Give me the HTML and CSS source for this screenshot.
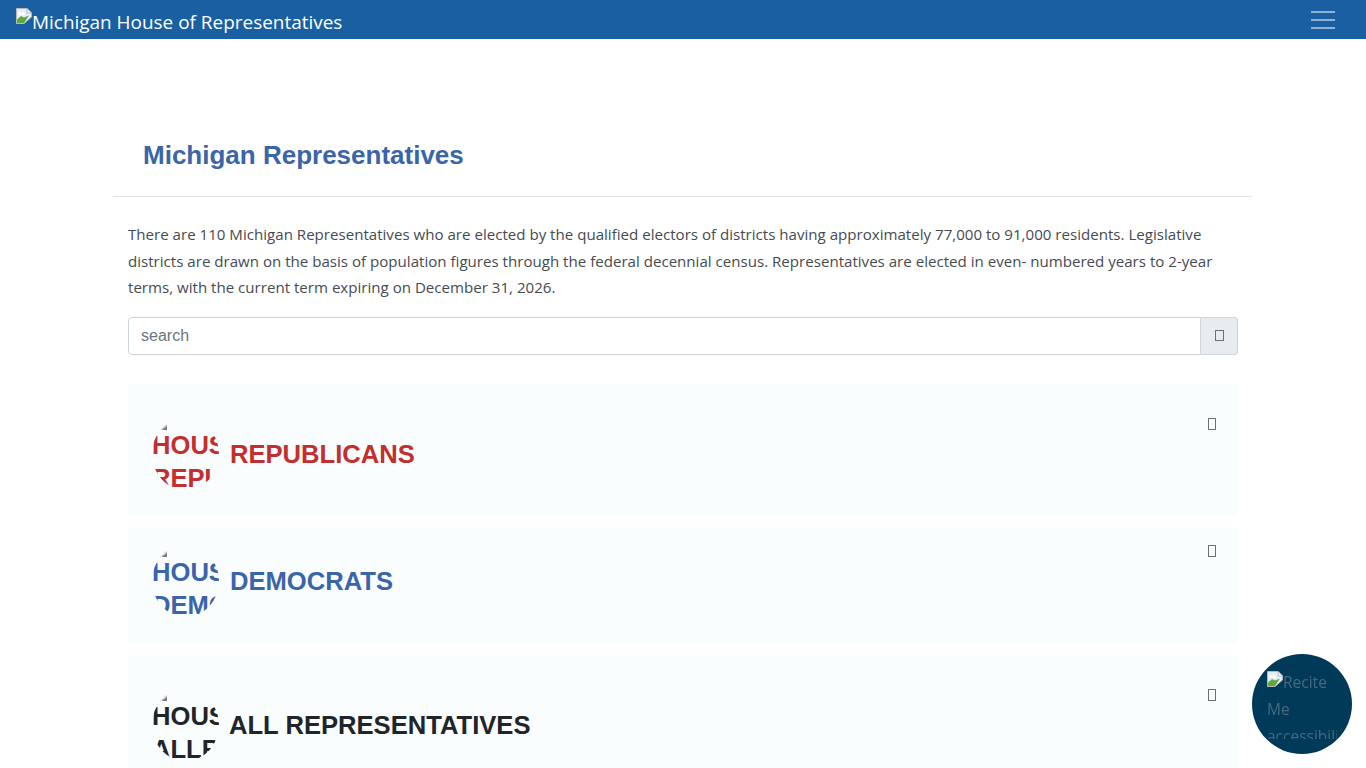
FILE: index.html
```html
<!DOCTYPE html>
<html lang="en">

<head>
    <meta charset="UTF-8">
    <title>Michigan Representatives</title>
    <link rel="stylesheet" href="styles.css">
</head>

<body>

    <div class="navbar">
        <a class="brand">
            <svg class="broken-img" width="16" height="16" viewBox="0 0 16 16">
                <path d="M0.5 0.5H11L15.5 5V9L8 15.5H0.5Z" fill="#e6edf8" stroke="#b9b9b9" />
                <path d="M1 15V11.5L5 8L8 9.5L13 7.5L8 15Z" fill="#5da93c" />
                <path d="M2 4H9V7H2Z" fill="#f8fafd" />
                <path d="M11 0.5V5H15.5Z" fill="#fff" stroke="#b9b9b9" />
            </svg>Michigan House of Representatives
        </a>
        <div class="toggler">
            <span></span>
            <span></span>
            <span></span>
        </div>
    </div>

    <div class="wrapper">
        <div class="title-row">
            <h1>Michigan Representatives</h1>
        </div>

        <div class="content">
            <p class="intro">There are 110 Michigan Representatives who are elected by the qualified electors of districts having approximately 77,000 to 91,000 residents. Legislative districts are drawn on the basis of population figures through the federal decennial census. Representatives are elected in even- numbered years to 2-year terms, with the current term expiring on December 31, 2026.</p>

            <div class="search">
                <input class="search-input" type="text" placeholder="search">
                <div class="search-btn"><span class="tofu"></span></div>
            </div>

            <div class="card card-rep">
                <div class="logo">
                    <svg class="broken-small" width="16" height="16" viewBox="0 0 16 16">
                        <path d="M8 12L15 3V12Z" fill="#c9c9c9" />
                        <path d="M10 12L15 8V12Z" fill="#777" />
                    </svg>
                    <div class="alt">HOUSE REPUBLICANS</div>
                </div>
                <h2>REPUBLICANS</h2>
                <span class="tofu card-tofu"></span>
            </div>

            <div class="card card-dem">
                <div class="logo">
                    <svg class="broken-small" width="16" height="16" viewBox="0 0 16 16">
                        <path d="M8 12L15 3V12Z" fill="#c9c9c9" />
                        <path d="M10 12L15 8V12Z" fill="#777" />
                    </svg>
                    <div class="alt">HOUSE DEMOCRATS</div>
                </div>
                <h2>DEMOCRATS</h2>
                <span class="tofu card-tofu"></span>
            </div>

            <div class="card card-all">
                <div class="logo">
                    <svg class="broken-small" width="16" height="16" viewBox="0 0 16 16">
                        <path d="M8 12L15 3V12Z" fill="#c9c9c9" />
                        <path d="M10 12L15 8V12Z" fill="#777" />
                    </svg>
                    <div class="alt">HOUSE ALLREPS</div>
                </div>
                <h2>ALL REPRESENTATIVES</h2>
                <span class="tofu card-tofu"></span>
            </div>
        </div>
    </div>

    <div class="recite">
        <div class="recite-alt">
            <svg class="broken-img recite-img" width="16" height="16" viewBox="0 0 16 16">
                <path d="M0.5 0.5H11L15.5 5V9L8 15.5H0.5Z" fill="#e6edf8" stroke="#b9b9b9" />
                <path d="M1 15V11.5L5 8L8 9.5L13 7.5L8 15Z" fill="#5da93c" />
                <path d="M2 4H9V7H2Z" fill="#f8fafd" />
                <path d="M11 0.5V5H15.5Z" fill="#fff" stroke="#b9b9b9" />
            </svg>Recite Me accessibility
        </div>
    </div>

</body>

</html>
```

FILE: styles.css
```css
html {
    overflow: hidden;
}

body {
    margin: 0px;
    height: 768px;
    overflow: hidden;
    background: #ffffff;
    color: #454b51;
    font-family: "Open Sans", "Noto Sans", sans-serif;
}

.navbar {
    height: 39px;
    background: #1a5fa2;
    padding: 0 16px;
    display: flex;
    justify-content: space-between;
    align-items: flex-start;
}

.brand {
    color: #ffffff;
    font-size: 18.95px;
    line-height: 27px;
    padding-top: 8px;
    white-space: nowrap;
}

.broken-img {
    vertical-align: 5px;
}

.toggler {
    width: 24px;
    margin: 11px 15px 0 0;
    display: flex;
    flex-direction: column;
    gap: 6px;
}

.toggler span {
    height: 2px;
    background: #8fb3d4;
}

.wrapper {
    width: 1139px;
    margin-left: 113px;
}

.title-row {
    height: 158px;
    border-bottom: 1px solid #dee2e6;
    box-sizing: border-box;
    padding: 100px 0 0 30px;
}

h1 {
    margin: 0;
    color: #3a65a9;
    font-family: "Liberation Sans", Arial, sans-serif;
    font-size: 26px;
    font-weight: bold;
    line-height: 32px;
}

.content {
    padding: 0 14px 0 15px;
}

.intro {
    margin: 24px 0 16px;
    font-size: 15.1px;
    line-height: 26.5px;
}

.search {
    display: flex;
    height: 38px;
    margin-bottom: 29px;
}

.search-input {
    flex: 1;
    border: 1px solid #ced4da;
    border-radius: 4px 0 0 4px;
    padding: 0 12px;
    font-family: "Liberation Sans", Arial, sans-serif;
    font-size: 16px;
    color: #495057;
    outline: none;
}

.search-input::placeholder {
    color: #6c757d;
}

.search-btn {
    width: 36px;
    background: #e9ecef;
    border: 1px solid #ced4da;
    border-left: none;
    border-radius: 0 4px 4px 0;
    display: flex;
    align-items: center;
    justify-content: center;
}

.tofu {
    display: inline-block;
    width: 7px;
    height: 9px;
    border: 1px solid #6b7075;
}

.card {
    display: flex;
    align-items: flex-start;
    background: #fafdfe;
    padding: 34px 22px 0 24px;
    margin-bottom: 12px;
    box-sizing: border-box;
}

.card-rep {
    height: 132px;
    color: #c22f2f;
}

.card-dem {
    height: 116px;
    padding-top: 17px;
    color: #3a65a9;
}

.card-all {
    height: 132px;
    padding-top: 33px;
    color: #212529;
}

.card h2 {
    margin: 20px 0 0 11px;
    font-family: "Liberation Sans", Arial, sans-serif;
    font-size: 25.6px;
    font-weight: bold;
    line-height: 32px;
}

.card-all h2 {
    margin-left: 10px;
}

.logo {
    width: 67px;
    height: 72px;
    flex-shrink: 0;
    border-radius: 50%;
    overflow: hidden;
    font-family: "Liberation Sans", Arial, sans-serif;
    font-size: 25.6px;
    font-weight: bold;
    line-height: 33px;
}

.broken-small {
    display: block;
    margin-bottom: -5px;
}

.alt {
    width: 200px;
}

.card-tofu {
    flex-shrink: 0;
    width: 6px;
    height: 10px;
    margin-left: auto;
}

.recite {
    position: fixed;
    left: 1252px;
    top: 654px;
    width: 100px;
    height: 100px;
    border-radius: 50%;
    background: #013a59;
    color: #456a80;
    overflow: hidden;
    box-sizing: border-box;
    padding: 15px;
    font-size: 15.5px;
    line-height: 27px;
}

.recite-alt {
    width: 70px;
    height: 70px;
    overflow: hidden;
}

.recite-img {
    vertical-align: 1px;
}
```
